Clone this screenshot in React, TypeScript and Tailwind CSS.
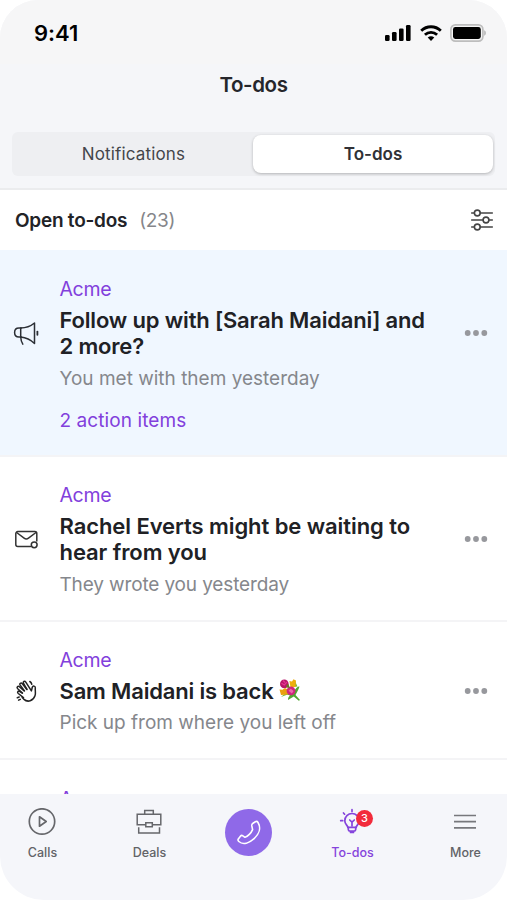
import type { ReactNode } from "react"
import clsx from "clsx"

const Megaphone = () => (
  <svg width="26" height="26" viewBox="0 0 26 26" fill="none" stroke="#2b2f35" strokeWidth="1.500" strokeLinecap="round" strokeLinejoin="round">
    <path d="M8.200 8H6C3.300 8 1.600 10 1.600 12.500S3.300 17 6 17h2.200" />
    <path d="M7.700 8c5.300 0 9.700-1.600 13.800-5v20.500c-4.100-4-8.500-6-13.800-6.500z" />
    <path d="M7.700 17c.2 3.100.8 5.300 2.100 7.200" />
    <path d="M24.400 11.600v3.200" strokeWidth="1.800" />
  </svg>
)

const Mail = () => (
  <svg width="26" height="26" viewBox="0 0 26 26" fill="none" stroke="#333" strokeWidth="1.500" strokeLinecap="round" strokeLinejoin="round">
    <path d="M17.500 20.500H4.800a2 2 0 0 1-2-2V7.600a2 2 0 0 1 2-2h17a2 2 0 0 1 2 2v7.500" />
    <path d="m3.600 6.500 7.500 5.700c1.300 1 3.100 1 4.400 0L23 6.500" />
    <circle cx="21.200" cy="18.800" r="2.900" />
  </svg>
)

const Wave = () => (
  <svg width="26" height="26" viewBox="0 0 26 26" fill="none" stroke="#222" strokeWidth="1.500" strokeLinecap="round" strokeLinejoin="round">
    <path d="m10.500 19.700-5.200-4.200c-1.500-1.300-.2-3 1.300-2l2.600 1.700" />
    <path d="m9.500 15-4.800-4.200c-1.500-1.500.2-3.300 1.700-2l4.500 3.900" />
    <path d="M11.500 12.900 7.200 7.300C6 5.600 8 4.200 9.400 5.800l4.300 5.500" />
    <path d="m14 11.500-3.500-6c-1-1.900 1.200-3 2.300-1.300l5.600 8.700.9-3.600c.6-2 3.300-1.400 3 .7-.3 2.700.7 5.200-.3 7.800-1.900 5.200-7.300 7.100-11.300 3.300l-1.500-1.600" />
    <path d="M16.800 3.500c1.100.6 1.700 1.500 2 2.700M4.300 19.700l1.900-.7M5.600 22.200l1.700-.9" />
  </svg>
)

const Bouquet = () => (
  <svg role="img" aria-label="bouquet" className="ml-1.5 inline-block align-[-2px]" width="22" height="22" viewBox="0 0 22 22">
    <path d="M15 12c2-3 4-5 5.500-4.500C19.500 11 17.500 14 16.500 16l4.500 5-1.200.8-5-4.300L9 21c0-2 .5-3 2-4.500l-6-2z" fill="#51a831" />
    <path d="M10 15 2 18l4.500-4zM15 8l1-6 2.500 5.500z" fill="#78bd36" />
    <circle cx="5.300" cy="4.900" r="4.300" fill="#b91668" />
    <path d="m2.500 4.300 2.800 1.600 2.500-2.700M4 1.500l2 2" stroke="#e43692" strokeWidth="1.200" fill="none" />
    <path d="M10.400 2 13 2.500 14.500.2 17 1.500 16.500 8l-5 .3z" fill="#edae0c" />
    <path d="m.5 10.500 3 .3L6 9l4 2.200-1.300 4.300-6.700.6z" fill="#eaa00e" />
    <circle cx="12" cy="11.800" r="4.400" fill="#cf267b" />
    <path d="m9.500 11.800 2.300-2 2.800 2.300-1.700 2.300z" fill="#ef65ad" />
    <path d="m7.500 6 2-1 1.300 4-3.300-.5z" fill="#6a781f" />
  </svg>
)

const Sliders = () => (
  <svg width="24" height="24" viewBox="0 0 24 24" fill="none" stroke="#444" strokeWidth="1.600" strokeLinecap="round">
    <path d="M1.700 5h2.600M10.300 5h12M1.700 12h11.300M19 12h3.300M1.700 19h2.600M10.300 19h12" />
    <circle cx="7.300" cy="5" r="2.900" />
    <circle cx="16" cy="12" r="2.900" />
    <circle cx="7.300" cy="19" r="2.900" />
  </svg>
)

const StatusIcons = () => (
  <div className="mt-[2px] flex items-center">
    <svg width="26" height="18" viewBox="0 0 26 18" fill="#000">
      <rect x="0" y="11" width="4.600" height="6" rx="1.300" />
      <rect x="7" y="8" width="4.600" height="9" rx="1.300" />
      <rect x="14" y="4.500" width="4.600" height="12.500" rx="1.300" />
      <rect x="21" y="1" width="4.600" height="16" rx="1.300" />
    </svg>
    <svg className="ml-[9px]" width="22" height="18" viewBox="0 0 22 18" fill="none" stroke="#000" strokeWidth="2.800">
      <path d="M1.200 6.800c5.600-5.400 14-5.400 19.600 0" />
      <path d="M4.900 10.800c3.600-3.300 8.600-3.300 12.200 0" />
      <path d="M7.700 13.600c2-1.700 4.600-1.700 6.600 0L11 17z" fill="#000" stroke="none" />
    </svg>
    <svg className="ml-[8px]" width="36" height="18" viewBox="0 0 36 18">
      <rect x=".9" y=".9" width="32" height="16.200" rx="4.500" fill="#f6f6f6" stroke="#bdbdbd" strokeWidth="1.700" />
      <rect x="3" y="3" width="27.800" height="12" rx="2.400" />
      <path d="M34.300 6.300c1.900.8 1.900 4.600 0 5.400z" fill="#aaa" />
    </svg>
  </div>
)

const MoreDots = () => (
  <svg width="24" height="8" viewBox="0 0 24 8" fill="#97989d">
    <circle cx="3.700" cy="4" r="2.900" />
    <circle cx="12" cy="4" r="2.900" />
    <circle cx="20.300" cy="4" r="2.900" />
  </svg>
)

const CallsIcon = () => (
  <svg width="28" height="28" viewBox="0 0 28 28" fill="none" stroke="#66676b" strokeWidth="1.700" strokeLinejoin="round">
    <circle cx="14" cy="13.500" r="12.700" />
    <path d="M11.500 8.800v9.400l6.700-4.700z" />
  </svg>
)

const DealsIcon = () => (
  <svg width="28" height="28" viewBox="0 0 28 28" fill="none" stroke="#66676b" strokeWidth="1.500">
    <path d="M9.700 6.200V2.400h8.600v3.800M11 16.800H2.200V6.200h23.600v10.600H17" />
    <path d="M10.800 14.800h6.500v4h-6.500zM3.700 19.200v5.800h20.800v-5.800" />
  </svg>
)

const BulbIcon = () => (
  <svg width="28" height="28" viewBox="0 0 28 28" fill="none" stroke="#8544dc" strokeWidth="1.700" strokeLinecap="round" strokeLinejoin="round">
    <path d="M9.800 19.400c0-2-3-2.900-3-6.700a7.200 7.200 0 0 1 14.400 0c0 3.800-3 4.700-3 6.700z" />
    <path d="M10.300 19.400v2.100c0 1 .8 1.600 1.600 1.600h4.200c.9 0 1.600-.7 1.600-1.600v-2.100M12.500 24.500h3M14 18v-3.800M11.700 12l2.300 2.200 2.300-2.200" />
    <path d="M14 1.700v1.800M5.500 5l1.100 1.200M2.700 12.700h2M22.500 5l-1 1.200" />
  </svg>
)

const MenuIcon = () => (
  <svg width="28" height="28" viewBox="0 0 28 28" stroke="#77787c" strokeWidth="1.700">
    <path d="M3 7.500h22M3 13.600h22M3 19.800h22" />
  </svg>
)

const PhoneIcon = () => (
  <svg width="28" height="28" viewBox="0 0 28 28" fill="none" stroke="#fff" strokeWidth="1.600" strokeLinejoin="round">
    <path d="M18 4.300l2.400-1.500c1-.6 2-.3 2.600.7 3.200 5.400 1.200 11.600-3.900 16.200-4.800 4.300-10.900 6.600-15.300 2.800-.9-.8-1-1.700-.5-2.600l2.100-2.700c.7-.9 1.600-1 2.500-.4l2.100 1.500c2.700-.8 6.300-4.500 7.600-7.700l-.8-3.700c-.2-1.200.2-2 1.200-2.600z" />
  </svg>
)

interface TodoItemProps {
  icon: ReactNode
  company: string
  title?: ReactNode
  detail?: string
  action?: string
  className: string
  titleClassName?: string
  detailClassName?: string
}

const TodoItem = ({ icon, company, title, detail, action, className, titleClassName, detailClassName }: TodoItemProps) => (
  <article className={clsx("flex shrink-0 items-start border-b-2 border-[#f4f4f6]", className)}>
    <div className="flex h-[114px] w-[59.500px] shrink-0 items-center pl-[13px]">{icon}</div>
    <div className="min-w-0 flex-1 whitespace-nowrap">
      <p className="text-[19.500px] leading-[26px] tracking-[-0.350px] text-[#8240dc]">{company}</p>
      {title && <h2 className={clsx("mt-[5px] text-[22px] leading-[26.400px] font-semibold text-[#202125]", titleClassName)}>{title}</h2>}
      {detail && <p className={clsx("mt-[6px] text-[19px] leading-[26px] text-[#85878c]", detailClassName)}>{detail}</p>}
      {action && <p className="mt-4 text-[19px] leading-[26px] tracking-[0.080px] text-[#8240dc]">{action}</p>}
    </div>
    {title && (
      <div className="mr-[19px] flex h-[114px] shrink-0 items-center">
        <MoreDots />
      </div>
    )}
  </article>
)

interface NavItemProps {
  icon: ReactNode
  label: string
  active?: boolean
  badge?: number
}

const NavItem = ({ icon, label, active, badge }: NavItemProps) => (
  <button className="flex w-[61px] flex-col items-center pt-[14px]">
    <span className="relative mr-px">
      {icon}
      {badge && (
        <span className="absolute top-[2px] left-[18px] flex size-[17px] items-center justify-center rounded-full bg-[#f22b3b] text-[11px] leading-none font-medium text-white">
          {badge}
        </span>
      )}
    </span>
    <span className={clsx("mt-[9px] text-[12.500px] leading-4 font-medium", active ? "text-[#8544dc]" : "text-[#626367]")}>{label}</span>
  </button>
)

export default function App() {
  return (
    <div className="h-[900px] w-[507px] overflow-hidden bg-white font-['Inter',sans-serif]">
      <main className="flex h-full flex-col overflow-hidden rounded-t-[38px] rounded-b-[44px] bg-white">
        <header className="h-[190px] shrink-0 border-b-2 border-[#ebecee] bg-[#f5f6f9]">
          <div className="flex h-[64px] items-center justify-between bg-[#f6f6f7] pr-[21px] pl-[34px]">
            <span className="mt-[3px] text-[22px] font-semibold tracking-[-0.050px] text-black">9:41</span>
            <StatusIcons />
          </div>
          <h1 className="mt-[7px] text-center text-[20.500px] leading-[28px] font-semibold tracking-[-0.400px] text-[#25262b]">To-dos</h1>
          <div className="mx-3 mt-[33px] flex h-[44px] rounded-md bg-[#eeeff2] text-[17px]">
            <button className="w-[241px] pt-[2px] pl-[2px] tracking-[0.150px] text-[#44464b]">Notifications</button>
            <button className="my-[3px] w-[240px] rounded-lg bg-white pt-[2px] font-semibold text-[#303136] shadow-[0_1px_3px_rgba(0,0,0,0.25)]">To-dos</button>
          </div>
        </header>

        <div className="flex h-[60px] shrink-0 items-center pr-[13px] pl-[15px] text-[19px]">
          <span className="pt-[2px] font-semibold tracking-[-0.250px] text-[#222327]">Open to-dos</span>
          <span className="ml-3 pt-[2px] tracking-[-0.300px] text-[#85868a]">(23)</span>
          <span className="ml-auto">
            <Sliders />
          </span>
        </div>

        <section className="flex min-h-0 flex-1 flex-col overflow-hidden">
          <TodoItem
            className="h-[207px] bg-[#f0f7ff] pt-[26px]"
            icon={<Megaphone />}
            company="Acme"
            title={<>Follow up with [Sarah Maidani] and<br />2 more?</>}
            titleClassName="tracking-[-0.170px]"
            detail="You met with them yesterday"
            action="2 action items"
          />
          <TodoItem
            className="h-[165px] pt-[25px]"
            icon={<Mail />}
            company="Acme"
            title={<>Rachel Everts might be waiting to<br />hear from you</>}
            titleClassName="tracking-[-0.080px]"
            detail="They wrote you yesterday"
            detailClassName="tracking-[-0.140px]"
          />
          <TodoItem
            className="h-[138px] pt-[25px] *:first:h-[87px] *:last:h-[87px]"
            icon={<Wave />}
            company="Acme"
            title={<>Sam Maidani is back<Bouquet /></>}
            titleClassName="tracking-[-0.180px]"
            detail="Pick up from where you left off"
          />
          <TodoItem className="h-[138px] pt-[26px]" icon={null} company="Acme" />
        </section>

        <nav className="flex h-[106px] shrink-0 bg-[#f5f6fa] pl-[12px]">
          <NavItem icon={<CallsIcon />} label="Calls" />
          <div className="ml-[46px]">
            <NavItem icon={<DealsIcon />} label="Deals" />
          </div>
          <button aria-label="Call" className="mt-[15px] ml-[45px] flex size-[47px] items-center justify-center rounded-full bg-[#8f69e8]">
            <PhoneIcon />
          </button>
          <div className="ml-[50px]">
            <NavItem icon={<BulbIcon />} label="To-dos" active badge={3} />
          </div>
          <div className="ml-[52px]">
            <NavItem icon={<MenuIcon />} label="More" />
          </div>
        </nav>
      </main>
    </div>
  )
}
